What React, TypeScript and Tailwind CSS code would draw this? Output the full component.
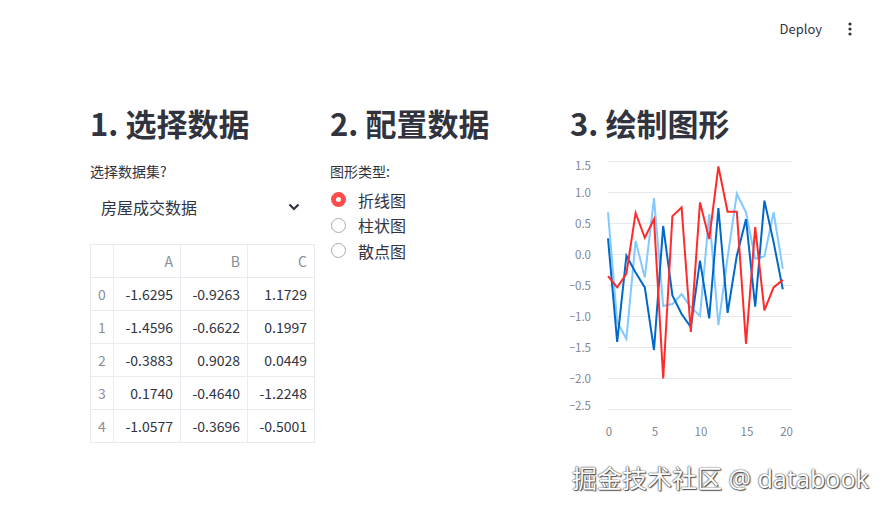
import React from "react";

const dark = [0.26, -1.41, -0.02, -0.29, -0.53, -1.54, 0.46, -0.66, -0.96, -1.17, -0.1, -1.03, 0.75, -0.94, -0.02, 0.57, -0.84, 0.87, 0.2, -0.56];
const light = [0.68, -1.09, -1.36, 0.22, -0.37, 0.91, -0.83, -0.8, -0.64, -0.85, -0.99, 0.65, -1.14, -0.05, 0.98, 0.68, -0.07, -0.03, 0.68, -0.23];
const red = [-0.35, -0.53, -0.31, 0.67, 0.27, 0.57, -2.0, 0.62, 0.76, -1.25, 0.84, 0.25, 1.42, 0.69, 0.69, -1.44, 0.44, -0.9, -0.53, -0.41];

const X0 = 38;
const DX = 9.2;
const Y0 = 100.5;
const SY = 62;
const pts = (d: number[]) => d.map((v, i) => `${(X0 + i * DX).toFixed(1)},${(Y0 - v * SY).toFixed(1)}`).join(" ");

const yTicks = [1.5, 1.0, 0.5, 0.0, -0.5, -1.0, -1.5, -2.0, -2.5];

function Chart() {
  return (
    <svg width="232" height="292" viewBox="0 0 232 292" className="block">
      {yTicks.map((t) => (
        <line key={t} x1={X0} x2={222} y1={Y0 - t * SY} y2={Y0 - t * SY} stroke="#e6e9ef" strokeWidth="1" />
      ))}
      {yTicks.map((t, i) => {
        let y = Y0 - t * SY;
        if (i === 0) y += 4;
        if (i === yTicks.length - 1) y -= 4;
        return (
          <text key={"l" + t} x={21} y={y} dy="0.35em" textAnchor="end" fontSize="11.5" fill="#808495" fontFamily="'Noto Sans CJK SC', sans-serif">
            {t === 0 ? "0.0" : t > 0 ? t.toFixed(1) : "\u2212" + Math.abs(t).toFixed(1)}
          </text>
        );
      })}
      {[0, 5, 10, 15, 20].map((t) => (
        <text key={"x" + t} x={t === 20 ? 223 : X0 + t * DX + 1} y={278} dy="0.35em" textAnchor={t === 20 ? "end" : "middle"} fontSize="11.5" fill="#808495" fontFamily="'Noto Sans CJK SC', sans-serif">
          {t}
        </text>
      ))}
      <polyline points={pts(light)} fill="none" stroke="#83c9ff" strokeWidth="2" strokeLinejoin="miter" />
      <polyline points={pts(dark)} fill="none" stroke="#0068c9" strokeWidth="2" strokeLinejoin="miter" />
      <polyline points={pts(red)} fill="none" stroke="#ff2b2b" strokeWidth="2" strokeLinejoin="miter" />
    </svg>
  );
}

const rows = [
  ["0", "-1.6295", "-0.9263", "1.1729"],
  ["1", "-1.4596", "-0.6622", "0.1997"],
  ["2", "-0.3883", "0.9028", "0.0449"],
  ["3", "0.1740", "-0.4640", "-1.2248"],
  ["4", "-1.0577", "-0.3696", "-0.5001"],
];

function Heading({ children }: { children: React.ReactNode }) {
  return <h2 className="text-[31px] leading-[38px] font-bold text-[#31333f]">{children}</h2>;
}

function Label({ children }: { children: React.ReactNode }) {
  return <div className="mt-[19px] text-[14px] leading-[20px] text-[#31333f]">{children}</div>;
}

function Radio({ label, checked }: { label: string; checked?: boolean }) {
  return (
    <div className="flex h-[25.5px] items-center gap-[12px]">
      {checked ? (
        <span className="ml-[1px] box-border h-[15px] w-[15px] rounded-full border-[5px] border-[#ff4b4b] bg-white" />
      ) : (
        <span className="ml-[1px] box-border h-[15px] w-[15px] rounded-full border border-[#a8abb3] bg-white" />
      )}
      <span className="text-[16px] leading-[24px] text-[#31333f]">{label}</span>
    </div>
  );
}

export default function App() {
  return (
    <div className="relative h-[509px] w-[887px] overflow-hidden bg-white font-['Noto_Sans_CJK_SC',sans-serif] text-[#31333f]">
      <header className="flex h-[58px] items-center justify-end gap-[20px] pr-[29px]">
        <span className="text-[13px] leading-[20px] text-[#31333f]">Deploy</span>
        <svg width="16" height="16" viewBox="0 0 16 16">
          <circle cx="8" cy="3" r="1.6" fill="#31333f" />
          <circle cx="8" cy="8" r="1.6" fill="#31333f" />
          <circle cx="8" cy="13" r="1.6" fill="#31333f" />
        </svg>
      </header>

      <main className="grid grid-cols-[224px_224px_232px] gap-x-[16px] pl-[90px] pt-[46px]">
        <section className="flex flex-col">
          <Heading>1. 选择数据</Heading>
          <Label>选择数据集?</Label>
          <div className="mt-[7px] flex h-[40px] items-center justify-between pb-[2px] pl-[11px] pr-[14px]">
            <span className="text-[16px] leading-[24px]">房屋成交数据</span>
            <svg width="12" height="8" viewBox="0 0 12 8">
              <polyline points="1.5,1.5 6,6 10.5,1.5" fill="none" stroke="#31333f" strokeWidth="2.2" />
            </svg>
          </div>
          <table className="mt-[16px] w-[224px] table-fixed border-collapse text-[14px]">
            <colgroup>
              <col className="w-[23px]" />
              <col className="w-[67px]" />
              <col className="w-[67px]" />
              <col className="w-[67px]" />
            </colgroup>
            <thead>
              <tr className="h-[33px]">
                <th className="border border-[#e9ebf0]" />
                {["A", "B", "C"].map((h) => (
                  <th key={h} className="border border-[#e9ebf0] pr-[7px] text-right font-normal text-[#8c8e99]">
                    {h}
                  </th>
                ))}
              </tr>
            </thead>
            <tbody>
              {rows.map((r) => (
                <tr key={r[0]} className="h-[33px]">
                  <td className="border border-[#e9ebf0] pl-[7px] text-left text-[#8c8e99]">{r[0]}</td>
                  {r.slice(1).map((v, i) => (
                    <td key={i} className="border border-[#e9ebf0] pr-[7px] text-right text-[#31333f]">
                      {v}
                    </td>
                  ))}
                </tr>
              ))}
            </tbody>
          </table>
        </section>

        <section className="flex flex-col">
          <Heading>2. 配置数据</Heading>
          <Label>图形类型:</Label>
          <div className="mt-[6px] flex flex-col">
            <Radio label="折线图" checked />
            <Radio label="柱状图" />
            <Radio label="散点图" />
          </div>
        </section>

        <section className="flex flex-col">
          <Heading>3. 绘制图形</Heading>
          <div className="mt-[12px]">
            <Chart />
          </div>
        </section>
      </main>

      <div className="absolute left-[572px] top-[462px] font-['Noto_Sans','Noto_Sans_CJK_SC',sans-serif] text-[25px] leading-[32px] text-white [text-shadow:0_0_1px_#222,1px_1px_1px_#555,0_0_2px_#777]">
        掘金技术社区 @ databook
      </div>
    </div>
  );
}
